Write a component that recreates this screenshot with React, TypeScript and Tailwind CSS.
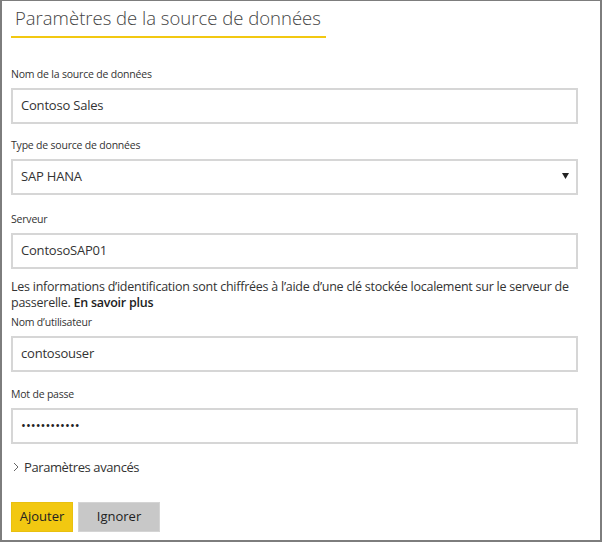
import React from "react";

const font = { fontFamily: '"Segoe UI", "Open Sans", "Noto Sans", sans-serif' };

function Label({ children }: { children: React.ReactNode }) {
  return (
    <div className="text-[10.5px] leading-[14px] tracking-[-0.2px] text-[#333333]">{children}</div>
  );
}

function Field({ children, extra }: { children: React.ReactNode; extra?: React.ReactNode }) {
  return (
    <div className="mt-[7px] flex h-[36px] w-[567px] items-center justify-between border-2 border-[#d6d6d6] bg-white pl-[8px] pr-[7px] text-[13px] tracking-[-0.2px] text-[#333333]">
      <span>{children}</span>
      {extra}
    </div>
  );
}

export default function App() {
  return (
    <div
      className="box-border h-[542px] w-[602px] border-x-2 border-b-2 border-t border-[#7d7d7d] bg-white pl-[9px]"
      style={font}
    >
      <div className="inline-block border-b-2 border-[#f2c811] pl-[4px] pr-[5px] pt-[3px] pb-[4px] text-[18.5px] font-light leading-[28px] text-[#444444]">
        Paramètres de la source de données
      </div>

      <div className="mt-[29px]">
        <Label>Nom de la source de données</Label>
        <Field>Contoso Sales</Field>
      </div>

      <div className="mt-[14px]">
        <Label>Type de source de données</Label>
        <Field
          extra={
            <svg width="7" height="6" viewBox="0 0 7 6" className="mt-[-2px]">
              <path d="M0 0 H7 L3.5 6 Z" fill="#222" />
            </svg>
          }
        >
          SAP HANA
        </Field>
      </div>

      <div className="mt-[17px]">
        <Label>Serveur</Label>
        <Field>ContosoSAP01</Field>
      </div>

      <p className="mt-[10px] w-[578px] text-[12.5px] leading-[16px] tracking-[-0.25px] text-[#333333]">
        Les informations d’identification sont chiffrées à l’aide d’une clé stockée localement sur le serveur de passerelle.{" "}
        <span className="font-semibold text-[#222222]">En savoir plus</span>
      </p>

      <div className="mt-[4px]">
        <Label>Nom d’utilisateur</Label>
        <Field>contosouser</Field>
      </div>

      <div className="mt-[15px]">
        <Label>Mot de passe</Label>
        <Field>
          <span className="tracking-[0px] text-[#222]">••••••••••••</span>
        </Field>
      </div>

      <div className="mt-[15px] flex items-center gap-[4px] text-[13px] leading-[16px] tracking-[-0.4px] text-[#333333]">
        <svg width="8" height="10" viewBox="0 0 8 10" className="ml-[1px]">
          <path d="M2 1 L6 5 L2 9" fill="none" stroke="#666" strokeWidth="1" />
        </svg>
        <span>Paramètres avancés</span>
      </div>

      <div className="mt-[27px] flex gap-[5px]">
        <button className="h-[30px] w-[62px] border border-[#e9c00f] bg-[#f2c811] text-[13px] text-[#222]">
          Ajouter
        </button>
        <button className="h-[30px] w-[82px] border border-[#d4d4d4] bg-[#c8c8c8] text-[13px] text-[#222]">
          Ignorer
        </button>
      </div>
    </div>
  );
}
